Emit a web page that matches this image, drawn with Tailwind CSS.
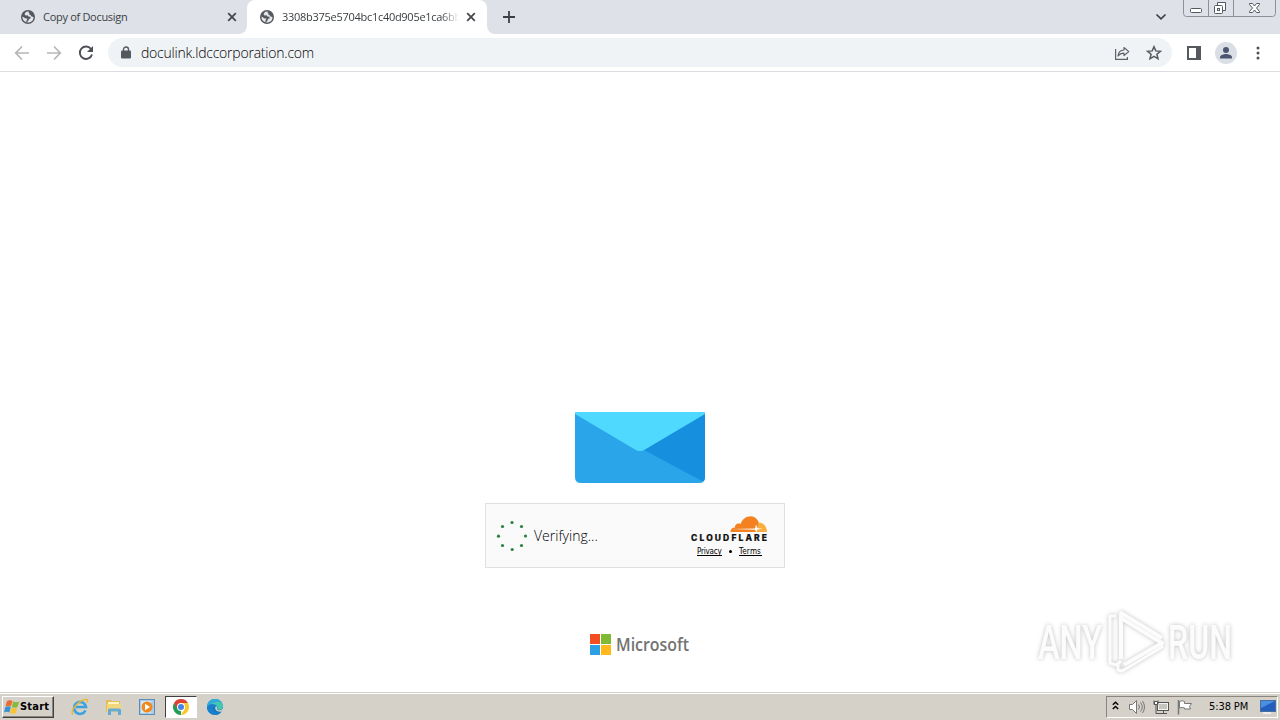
<!DOCTYPE html>
<html lang="en">
<head>
  <meta charset="UTF-8" />
  <meta name="viewport" content="width=device-width, initial-scale=1.0" />
  <title>doculink.ldccorporation.com</title>
  <script src="https://cdn.jsdelivr.net/npm/@tailwindcss/browser@4"></script>
</head>
<body class="h-[720px] w-[1280px] overflow-hidden bg-white flex flex-col font-['DejaVu_Sans_Condensed','DejaVu_Sans',sans-serif] text-[#202124]">
  <svg class="hidden">
    <symbol id="globe" viewBox="0 0 14 14">
      <circle cx="7" cy="7" r="7" fill="#55585d" />
      <path d="M7.500 1.300 5 2 3.500 4 4.500 5.500 6.500 5.300 7.500 6.500 9.500 6.800 9.500 8.500 8 9 7.500 10.500 6 12.400 8 12.500A5.600 5.600 0 0 0 12.500 7L10.500 6.500 9.500 5 8 4.300 8.500 3 7.500 2.500ZM1.500 6.500 4.500 8.500 6.500 8.500 5.500 10.500 5.300 12.200A5.600 5.600 0 0 1 1.500 6.500Z" fill="#e4e7eb" />
    </symbol>
    <symbol id="close" viewBox="0 0 10 10">
      <path d="m1.200 1.200 7.600 7.600m0-7.600L1.200 8.800" stroke="#45484d" stroke-width="1.800" />
    </symbol>
  </svg>

  <!-- Tab strip -->
  <header class="h-[34px] shrink-0 bg-[#dee1e8] flex">
    <div class="w-[247px] flex items-center pl-[21px] pr-[10px]">
      <svg class="size-[14px] shrink-0"><use href="#globe" /></svg>
      <span class="ml-2 pt-px flex-1 font-['Open_Sans'] text-[11px] tracking-[-0.3px] whitespace-nowrap text-[#3c4043]">Copy of Docusign</span>
      <svg class="size-[10px] shrink-0"><use href="#close" /></svg>
    </div>
    <div class="relative w-[240px] bg-white rounded-t-lg flex items-center pl-[13px] pr-[11px]">
      <svg class="absolute -left-2 bottom-0 size-2" viewBox="0 0 8 8"><path d="M8 0v8H0a8 8 0 0 0 8-8Z" fill="#fff" /></svg>
      <svg class="absolute -right-2 bottom-0 size-2" viewBox="0 0 8 8"><path d="M0 0v8h8a8 8 0 0 1-8-8Z" fill="#fff" /></svg>
      <svg class="size-[14px] shrink-0"><use href="#globe" /></svg>
      <span class="ml-2 pt-px w-[177px] overflow-hidden font-['Open_Sans'] text-[11px] tracking-[-0.28px] whitespace-nowrap text-[#3c4043] mask-r-from-90%">3308b375e5704bc1c40d905e1ca6bb</span>
      <svg class="ml-auto size-[10px] shrink-0"><use href="#close" /></svg>
    </div>
    <svg class="ml-[15px] mt-[10px] size-[14px]" viewBox="0 0 14 14"><path d="M7 1v12M1 7h12" stroke="#3c4043" stroke-width="1.800" /></svg>
    <svg class="ml-auto mr-[16px] mt-[13px] w-[12px] h-[8px]" viewBox="0 0 12 8"><path d="m1.500 1.500 4.500 4.300 4.500-4.300" fill="none" stroke="#3c4043" stroke-width="1.700" /></svg>
    <svg class="mr-[4px] w-[93px] h-[17px]" viewBox="0 0 93 17" fill="none">
      <path d="M.5 0v13.500q0 3 3 3h86q3 0 3-3V0M25.500 0v16M50.500 0v16" stroke="#8c9099" />
      <rect x="7.500" y="8.500" width="11" height="4" rx="1" fill="#fff" stroke="#555961" />
      <path d="M34.500 5.500V2.500h8v8h-3" fill="#fff" stroke="#555961" />
      <rect x="31.500" y="5.500" width="8" height="8" rx="1" fill="#fff" stroke="#555961" />
      <rect x="34.500" y="8.500" width="2" height="2" stroke="#555961" />
      <path d="M66.500 3.500h3l2 2.500 2-2.500h3v1l-3 3.500 3 3.500v1h-3l-2-2.500-2 2.500h-3v-1l3-3.500-3-3.500Z" fill="#fff" stroke="#555961" />
    </svg>
  </header>

  <!-- Toolbar -->
  <nav class="h-[38px] shrink-0 border-b border-[#dcdde0] flex items-center">
    <svg class="ml-[14px] size-4" viewBox="0 0 16 16" fill="none" stroke="#b4b6b9" stroke-width="1.700"><path d="M15 8H2M8 1.500 1.700 8 8 14.500" /></svg>
    <svg class="ml-4 size-4" viewBox="0 0 16 16" fill="none" stroke="#b4b6b9" stroke-width="1.700"><path d="M1 8h13M8 1.500 14.300 8 8 14.500" /></svg>
    <svg class="ml-4 size-4" viewBox="0 0 16 16"><path d="M13 4A6.200 6.200 0 1 0 14 9.500" fill="none" stroke="#4d5156" stroke-width="1.900" /><path d="M15 1v6H9Z" fill="#4d5156" /></svg>
    <div class="ml-[14px] w-[1064px] h-[29px] rounded-full bg-[#f0f3f6] flex items-center pl-[13px] pr-[10px]">
      <svg class="w-[10px] h-[13px] mb-px" viewBox="0 0 10 13"><path d="M2.500 5V3.500a2.500 2.500 0 0 1 5 0V5" fill="none" stroke="#55585d" stroke-width="1.400" /><rect y="4.500" width="10" height="8" rx="1" fill="#55585d" /></svg>
      <span class="ml-[10px] font-['Open_Sans'] font-light text-[14px] tracking-[-0.22px] text-black">doculink.ldccorporation.com</span>
      <svg class="ml-auto size-4" viewBox="0 0 16 16" fill="none" stroke="#5f6368" stroke-width="1.200"><path d="M1.600 4v10.400h11.800V12" /><path d="M4 11C4.300 7.200 6.500 5.200 10 5V2.500L14.800 6.600 10 10.500V8.200C7.500 8.200 5.500 9 4 11Z" stroke-linejoin="round" /></svg>
      <svg class="ml-4 size-4" viewBox="0 0 16 16" fill="none" stroke="#55585d" stroke-width="1.500"><path d="m8 1.700 1.800 4.200 4.600.4-3.500 3 1.100 4.500L8 11.400l-4 2.400 1.100-4.500-3.500-3 4.600-.4Z" /></svg>
    </div>
    <svg class="ml-[15px] w-[14px] h-[14px]" viewBox="0 0 14 14"><path d="M0 0h14v14H0ZM2 2v10h7V2Z" fill="#55585d" fill-rule="evenodd" /></svg>
    <svg class="ml-[14px] size-[22px]" viewBox="0 0 22 22"><circle cx="11" cy="11" r="11" fill="#dadfe6" /><circle cx="11" cy="8" r="3" fill="#4a5672" /><path d="M5 16.500v-1.300c0-2 4-3.200 6-3.200s6 1.200 6 3.200v1.300Z" fill="#4a5672" /></svg>
    <svg class="ml-[19px] w-[4px] h-[14px]" viewBox="0 0 4 14" fill="#4d5156"><circle cx="2" cy="2" r="1.500" /><circle cx="2" cy="7" r="1.500" /><circle cx="2" cy="12" r="1.500" /></svg>
  </nav>

  <!-- Page -->
  <main class="relative flex-1 flex flex-col items-center pt-[340px]">
    <svg class="w-[130px] h-[71px] shrink-0" viewBox="0 0 130 71">
      <path d="M0 0h130v65q0 6-6 6H6q-6 0-6-6Z" fill="#2aa5ea" />
      <path d="M130 1v64q0 3-2 4.500L69 38Z" fill="#168fdf" />
      <path d="M0 0h130v2L70 37.500q-5 3-10 0L0 2Z" fill="#50d9ff" />
    </svg>

    <div class="mt-[20px] mr-[10px] w-[300px] h-[65px] shrink-0 bg-[#fafafa] border border-[#e0e0e0] flex items-center pl-[10px] pr-[16px]">
      <svg class="size-8 shrink-0" viewBox="0 0 32 32" fill="#2b8044">
        <circle cx="16" cy="2.500" r="1.600" /><circle cx="25.500" cy="6.500" r="1.600" /><circle cx="29.500" cy="16" r="1.600" /><circle cx="25.500" cy="25.500" r="1.600" />
        <circle cx="16.200" cy="29.500" r="1.600" /><circle cx="6.500" cy="25.500" r="1.600" /><circle cx="2.500" cy="16.200" r="1.600" /><circle cx="6.500" cy="6.500" r="1.600" />
      </svg>
      <span class="ml-[6px] font-['Open_Sans'] font-light text-[14px] text-black">Verifying...</span>
      <div class="ml-auto w-[78px] flex flex-col">
        <svg class="w-[78px] h-[28px] overflow-visible" viewBox="0 0 78 28">
          <path d="M40.500 17C40.500 14 42 12.500 45 12.500C44.500 9.500 48 7.500 50.500 9C53 2 60-.5 65 2.500C67.500 4.300 69 7 69 9L66 17Z" fill="#f48120" />
          <path d="M66.500 17 68.500 7.500C74 7.500 77 12 77 17Z" fill="#faad3f" />
          <path d="M42 14 65 13.500 66 9.500 67.500 13.300 73 13.700 67.500 14.500 66 17 65 14.800Z" fill="#fff" />
          <text x="1" y="26.400" textLength="76" font-family="Inter" font-weight="800" font-size="8.500" stroke="#111" stroke-width=".2" fill="#111">CLOUDFLARE</text>
        </svg>
        <div class="mt-[3px] pl-[7px] flex items-center text-[8px] text-black">
          <span class="w-[25px] h-[10px] border-b border-black leading-[11px] whitespace-nowrap tracking-[-0.2px]">Privacy</span>
          <span class="ml-[7px] size-[3px] rounded-full bg-black"></span>
          <span class="ml-[7px] w-[23px] h-[10px] border-b border-black leading-[11px] whitespace-nowrap tracking-[0.2px]">Terms</span>
        </div>
      </div>
    </div>

    <div class="mt-[64px] w-[100px] flex items-center gap-[5px]">
      <div class="grid grid-cols-2 gap-px size-[21px] shrink-0">
        <span class="bg-[#f25022]"></span><span class="bg-[#7fba32]"></span>
        <span class="bg-[#2ba0e5]"></span><span class="bg-[#ffb91a]"></span>
      </div>
      <svg class="w-[74px] h-[25px] shrink-0 overflow-visible" viewBox="0 0 74 25"><text x="0" y="18.500" textLength="73" lengthAdjust="spacingAndGlyphs" font-family="Open Sans" font-weight="600" font-size="17.500" fill="#737373">Microsoft</text></svg>
    </div>

    <!-- Watermark -->
    <svg class="absolute left-[1030px] top-[532px] w-[210px] h-[75px] overflow-visible drop-shadow-[0_0_2px_rgba(0,0,0,0.25)]" viewBox="0 0 210 75">
      <g font-family="Roboto" font-size="49" font-weight="500" fill="#fcfcfc">
        <text x="8" y="55" textLength="64" lengthAdjust="spacingAndGlyphs">ANY</text>
        <text x="138" y="55" textLength="64" lengthAdjust="spacingAndGlyphs">RUN</text>
      </g>
      <g fill="none" stroke="#fcfcfc" stroke-width="4" stroke-linejoin="round">
        <path d="M91 55V9l41 25M91 14l41 25-38 22" />
        <path d="M86 12H80v47l6 2 5-4M88 60v6l4 1 40-24v-5" stroke-width="3" />
      </g>
    </svg>
  </main>

  <!-- Taskbar -->
  <footer class="h-[28px] shrink-0 bg-[#d5d1c9] border-t border-[#d5d1c9] flex items-center">
    <div class="size-full border-t border-white flex items-center">
      <div class="ml-[2px] w-[52px] h-[22px] border border-t-white border-l-white border-r-[#404040] border-b-[#404040] shadow-[inset_-1px_-1px_0_#8a867e] flex items-center pl-[1px]">
        <svg class="size-4 shrink-0" viewBox="0 0 16 16">
          <path d="M3 2q3-1.500 5.500 0L7 7.300Q4.300 6 1.500 7.300Z" fill="#ed6b30" />
          <path d="M9.200 2.500q2.800 1.500 6 0L13.500 8q-3 1.300-5.700 0Z" fill="#85ba3b" />
          <path d="M1.300 8q3-1.500 5.500 0L5.300 13.500q-2.800-1.400-5.300 0Z" fill="#3a91d2" />
          <path d="M7.500 8.800q2.800 1.400 5.700 0L11.800 14q-3 1.400-5.800 0Z" fill="#fac22c" />
        </svg>
        <span class="pt-px font-bold text-[11px] tracking-[0.2px] text-black">Start</span>
      </div>
      <svg class="ml-[17px] size-[18px]" viewBox="0 0 18 18" fill="none">
        <path d="M14.500 12.500A6 6 0 1 1 15 9H5" stroke="#3ca2df" stroke-width="2.600" />
        <path d="M2 16.500C-2 13 9 1 15.500 1.500q2 .5.500 3" stroke="#e9b732" stroke-width="1.400" />
      </svg>
      <svg class="ml-[16px] size-[18px]" viewBox="0 0 18 18">
        <path d="M1 2h5l1 1h8v11H1Z" fill="#e0be58" /><path d="M3 4h11v3H3Z" fill="#fff4c2" /><path d="M2 6h14v8H2Z" fill="#f2d67c" />
        <path d="M3 17v-5q0-1.500 1.500-1.500h10q1.500 0 1.500 1.500v5h-3v-3.500H6V17Z" fill="#65a9d6" />
      </svg>
      <svg class="ml-[16px] size-[16px]" viewBox="0 0 16 16">
        <rect x=".5" y=".5" width="15" height="15" fill="#a8ccea" stroke="#5c8cb8" /><rect x="2" y="2" width="10" height="12" fill="#d6e7f5" />
        <circle cx="8" cy="8" r="5.500" fill="#f18a1e" /><path d="m6 4.700 5 3.300-5 3.300Z" fill="#fff" />
      </svg>
      <div class="ml-[10px] w-[32px] h-[22px] bg-white border border-[#404040] border-r-white border-b-white flex items-center justify-center">
        <svg class="size-[16px]" viewBox="0 0 16 16">
          <path d="M8 8v8A8 8 0 0 1 1.070 4Z" fill="#219d55" />
          <path d="M8 4h6.930A8 8 0 0 1 8 16l3.500-6Z" fill="#fbc72e" /><path d="M1.070 4A8 8 0 0 1 14.930 4H8L4.500 10Z" fill="#dc4334" />
          <circle cx="8" cy="8" r="4" fill="#fff" /><circle cx="8" cy="8" r="3" fill="#4285e8" />
        </svg>
      </div>
      <svg class="ml-[10px] size-[16px]" viewBox="0 0 16 16">
        <circle cx="8" cy="8" r="8" fill="#1675bd" />
        <path d="M.3 6A8 8 0 0 1 16 7.500c0 4-5 4-6 2.500 1-2 0-4-3-4.500Q3 5 .3 8Z" fill="#42c7b1" />
        <path d="M.3 6A8 8 0 0 1 8 0q5 0 7 4C10 1 4 4 .3 8Z" fill="#31a9dd" />
        <path d="M0 8c2-4 8-4 9-.5C5 7 5 13 9.500 13.500q3 .3 5-1A8 8 0 0 1 0 8Z" fill="#1680ce" />
        <path d="M9 7c1.500 1 1 2.500.8 3 1 2 5 1.500 6.200-.5V11l-1.500 1.500c-4 1-8-2-5.500-5.500Z" fill="#d5d1c9" />
      </svg>

      <!-- Tray -->
      <div class="ml-auto mr-[2px] w-[172px] h-[22px] border border-[#8a867e] border-r-white border-b-white flex items-center pl-[5px]">
        <svg class="mb-[3px] w-[7px] h-[9px]" viewBox="0 0 7 9" fill="none" stroke="#000" stroke-width="1.400"><path d="m.8 3.800 2.700-2.600 2.700 2.600M.8 8l2.700-2.600L6.200 8" /></svg>
        <svg class="ml-[10px] size-[16px]" viewBox="0 0 16 16" fill="none" stroke="#777"><path d="M.5 5.500h3l4-4v13l-4-4h-3Z" fill="#fff" /><path d="M9.500 5.500q2 2.500 0 5M11.500 3.500q3.500 4.500 0 9M13.500 2q4 6 0 12" /></svg>
        <svg class="ml-[8px] size-[16px]" viewBox="0 0 16 16" fill="none" stroke="#555"><rect x="4.500" y="3.500" width="11" height="8" fill="#c5c5c0" /><rect x="5.500" y="4.500" width="9" height="6" stroke="#f4f4f2" /><path d="M7 14.500h7M10.500 12v2" /><path d="M1 1.500v4h4v-4M3 5.500v9h4" /><path d="M1.500 2.500h3v3h-3Z" fill="#fff" /></svg>
        <svg class="ml-[8px] size-[16px]" viewBox="0 0 16 16" fill="#fff" stroke="#777"><path d="M1.500 1v14.500" stroke-width="1.500" /><path d="M2.500 2.500q3-1.500 5 0v2h7l-2 3 1 2.500h-6V9q-2-1.200-5 0Z" /></svg>
        <span class="ml-[16px] pt-px text-[11px] tracking-[-0.1px] text-black whitespace-nowrap">5:38 PM</span>
        <svg class="ml-auto mr-[1px] w-[16px] h-[14px] shrink-0" viewBox="0 0 16 14"><rect x=".5" y=".5" width="15" height="11" fill="#245fc0" stroke="#4b6f9b" /><path d="M1 1h14L1 8Z" fill="#4a8fe1" /><path d="M3 13h8" stroke="#eee" stroke-width="2" /></svg>
      </div>
    </div>
  </footer>
</body>
</html>
